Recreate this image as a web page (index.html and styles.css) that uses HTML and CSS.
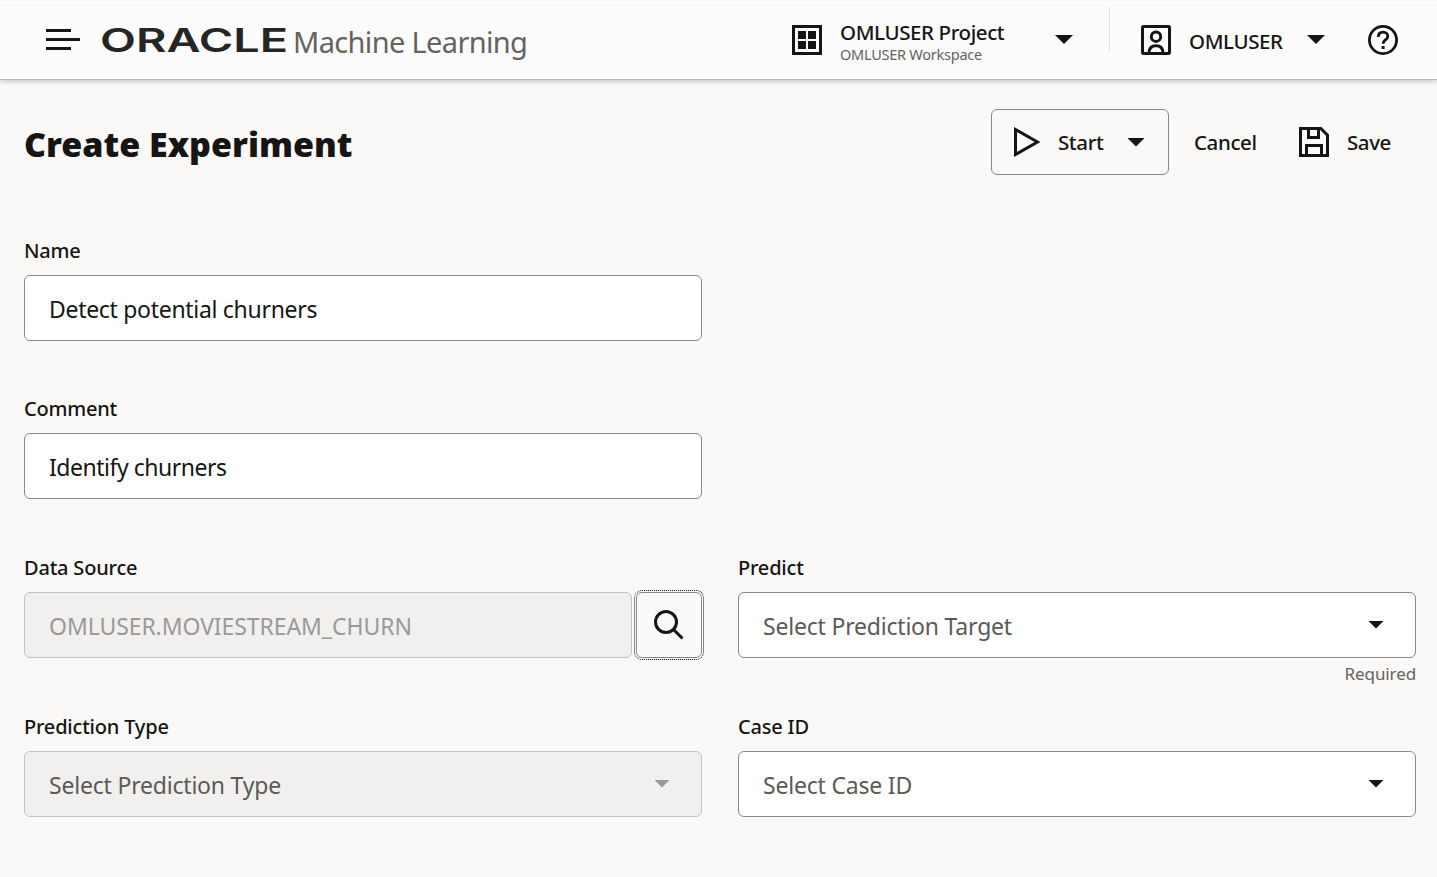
FILE: index.html
```html
<!DOCTYPE html>
<html lang="en">
<head>
<meta charset="utf-8">
<title>Create Experiment</title>
<link rel="stylesheet" href="styles.css">
</head>
<body>
<header class="topbar">
  <svg class="menu" width="34" height="22" viewBox="0 0 34 22"><path d="M0 1.500h25M0 10.500h34M0 19.500h25" stroke="#161513" stroke-width="3"/></svg>
  <svg class="wordmark" width="186" height="30" viewBox="0 0 186 30"><text x="-1" y="27" textLength="188" lengthAdjust="spacingAndGlyphs">ORACLE</text></svg>
  <span class="product">Machine Learning</span>
  <div class="project">
    <svg width="30" height="30" viewBox="0 0 30 30"><path d="M1.500 1.500h27v27h-27z" fill="none" stroke="#161513" stroke-width="3"/><path d="M6 6h8v8H6zM16 6h8v8h-8zM6 16h8v8H6zM16 16h8v8h-8z" fill="#161513"/></svg>
    <div class="project-text"><span class="project-name">OMLUSER Project</span><span class="project-ws">OMLUSER Workspace</span></div>
    <i class="caret"></i>
  </div>
  <div class="user">
    <svg width="30" height="30" viewBox="0 0 30 30" fill="none" stroke="#161513" stroke-width="3"><rect x="1.500" y="1.500" width="27" height="27" rx="1.200"/><circle cx="15" cy="11.700" r="4.700"/><path d="M8 28c0-5 3-7.300 7-7.300s7 2.300 7 7.300"/></svg>
    <span class="user-name">OMLUSER</span>
    <i class="caret"></i>
  </div>
  <svg class="help" width="30" height="30" viewBox="0 0 30 30" fill="none" stroke="#161513" stroke-width="2.800"><circle cx="15" cy="15" r="13.600"/><path d="M10.300 12c0-3 2-4.800 4.800-4.800s4.700 1.700 4.700 4.200c0 3.300-4.700 3.300-4.700 7.300"/><path d="M13.600 22.500h3" stroke-width="3"/></svg>
</header>
<main>
  <div class="heading">
    <h1>Create Experiment</h1>
    <button class="start">
      <svg width="26" height="30" viewBox="0 0 26 30"><path d="M1.500 2.500v25L23.500 15z" fill="none" stroke="#161513" stroke-width="3"/></svg>
      <span class="t-start">Start</span><i class="caret"></i>
    </button>
    <button class="plain cancel"><span class="t-cancel">Cancel</span></button>
    <button class="plain save">
      <svg width="30" height="30" viewBox="0 0 30 30" fill="none" stroke="#161513" stroke-width="3"><path d="M1.500 1.500h20.300l6.700 6.700v20.300h-27z"/><path d="M9.500 1v9.500h10V1M7.500 29V18.500h15V29"/></svg>
      <span class="t-save">Save</span>
    </button>
  </div>
  <form class="fields">
    <div class="field wide"><label class="l-name">Name</label><div class="box"><span class="v-name">Detect potential churners</span></div></div>
    <div class="field wide"><label class="l-comment">Comment</label><div class="box"><span class="v-comment">Identify churners</span></div></div>
    <div class="field"><label class="l-source">Data Source</label>
      <div class="lookup"><div class="box disabled"><span class="v-source">OMLUSER.MOVIESTREAM_CHURN</span></div>
      <div class="search"><svg width="30" height="30" viewBox="0 0 30 30" fill="none" stroke="#161513" stroke-width="3"><circle cx="12" cy="12" r="10.500"/><path d="M19.500 19.500l9 9"/></svg></div></div>
    </div>
    <div class="field"><label class="l-predict">Predict</label><div class="box select"><span class="v-target">Select Prediction Target</span><i class="caret small"></i></div><span class="required">Required</span></div>
    <div class="field"><label class="l-type">Prediction Type</label><div class="box select disabled"><span class="v-type">Select Prediction Type</span><i class="caret small"></i></div></div>
    <div class="field"><label class="l-case">Case ID</label><div class="box select"><span class="v-case">Select Case ID</span><i class="caret small"></i></div></div>
  </form>
</main>
</body>
</html>
```
FILE: styles.css
```css
* { box-sizing: border-box; }
body { margin: 0; height: 877px; overflow: hidden; background: #fbf9f8; color: #161513; font-family: "Noto Sans", "Open Sans", sans-serif; }
svg { display: block; flex: none; }
span, label, h1 { white-space: nowrap; }
.topbar { position: relative; height: 80px; padding: 0 39px 0 46px; display: flex; align-items: center; background: #fcfcfc; border-top: 1px solid #fdf6f4; border-bottom: 1px solid #b4b8c0; box-shadow: 0 1px 6px rgba(0,0,0,.25); }
.wordmark { margin-left: 21px; overflow: visible; }
.wordmark text { font: 600 33px Inter, sans-serif; fill: #252525; }
.product { margin: 3px 0 0 6px; font-size: 29px; line-height: 40px; letter-spacing: -.65px; color: #65625f; }
.project { margin-left: auto; width: 318px; height: 44px; margin-top: -23px; padding-top: 23px; display: flex; align-items: center; border-right: 1px solid #e0dfde; }
.project > svg { margin-top: -1px; }
.project-text { display: flex; flex-direction: column; width: 215px; margin-left: 18px; padding-top: 3px; }
.project-name { font-size: 20.500px; font-weight: 500; line-height: 24px; letter-spacing: -.4px; }
.project-ws { font-size: 14.500px; line-height: 20px; letter-spacing: -.25px; color: #65625f; }
.caret { display: block; flex: none; width: 18px; height: 9px; background: #161513; clip-path: polygon(0 0, 100% 0, 50% 100%); }
.project .caret, .user .caret { margin-top: -1px; }
.caret.small { width: 16px; height: 8px; }
.user { display: flex; align-items: center; margin-left: 31px; }
.user-name { width: 118px; margin: 2px 0 0 18px; font-size: 20.500px; font-weight: 500; letter-spacing: -.4px; }
.help { margin-left: 43px; }
.heading { display: flex; align-items: center; height: 66px; margin: 29px 38px 0 24px; }
h1 { flex: 1; margin: 3px 0 0; font-size: 34px; font-weight: 900; line-height: 44px; }
button { font: 500 20.500px/30px "Noto Sans", sans-serif; letter-spacing: -.4px; color: #161513; background: none; border: 0; padding: 0; display: flex; align-items: center; text-align: left; }
.start { width: 178px; height: 66px; padding: 0 0 0 22px; border: 1px solid #8b8985; border-radius: 6px; }
.t-start { width: 69px; margin-left: 18px; }
.cancel { width: 105px; margin-left: 25px; }
.save { width: 100px; }
.t-save { margin-left: 18px; }
.fields { display: grid; grid-template-columns: 678px 678px; column-gap: 36px; padding: 61px 0 0 24px; grid-template-rows: 158px 159px 159px 158px; }
.field { display: flex; flex-direction: column; }
.field.wide { grid-column: 1 / 3; width: 678px; }
label { font-size: 20px; font-weight: 500; line-height: 30px; margin-bottom: 9px; letter-spacing: -.2px; }
.box { height: 66px; width: 100%; display: flex; align-items: center; padding: 1px 31px 0 24px; background: #fff; border: 1px solid #8b8985; border-radius: 6px; font-size: 23px; letter-spacing: -.2px; }
.v-name { letter-spacing: -.3px; }
.v-comment { letter-spacing: -.48px; }
.box.disabled { background: #f1f0ef; border-color: #c5c3c1; }
.v-source { color: #9b9997; letter-spacing: -.08px; }
.select { justify-content: space-between; color: #5c5a57; }
.select .caret { margin-top: -2px; }
.disabled .caret { background: #9b9997; }
.lookup { display: flex; }
.lookup .box { flex: none; width: 608px; }
.search { flex: none; width: 66px; height: 66px; margin-left: 4px; display: flex; align-items: center; padding-left: 17px; border: 1px solid #8b8985; border-radius: 6px; outline: 1px dotted #161513; outline-offset: 1px; }
.required { align-self: flex-end; font-size: 17px; line-height: 24px; margin-top: 4px; letter-spacing: -.1px; color: #65625f; }
```
